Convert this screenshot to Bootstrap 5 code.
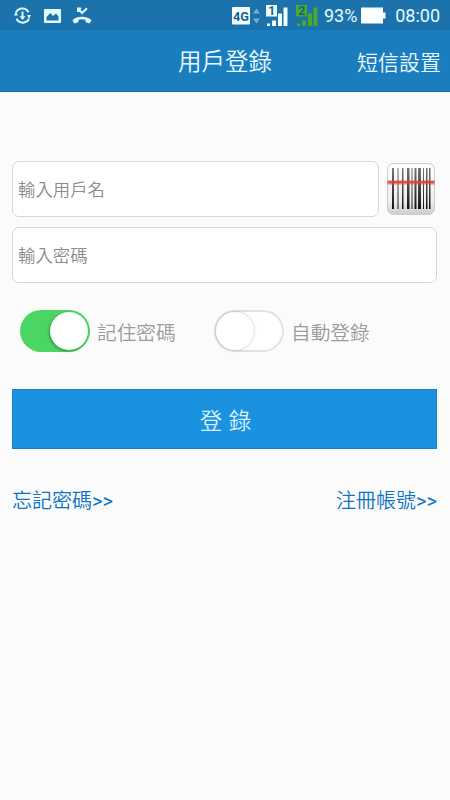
<!DOCTYPE html>
<html lang="zh-Hant">
<head>
<meta charset="utf-8">
<meta name="viewport" content="width=device-width, initial-scale=1">
<title>用戶登錄</title>
<link href="https://cdn.jsdelivr.net/npm/bootstrap@5.3.0/dist/css/bootstrap.min.css" rel="stylesheet">
<style>
body{background:#fbfbfb;font-family:Roboto,"Noto Sans CJK TC",sans-serif;font-weight:350;min-height:800px;line-height:1}
.status-bar{height:30px;background:#1c72ab;color:#e6fbff;padding:2px 10px 0 13px}
.status-bar svg{display:block;flex:none}
.status-text{font-size:18px;font-weight:400;white-space:nowrap}
.right-side{margin-left:140px;width:208px}
.signal{margin-left:4px}
.signal + .signal{margin-left:7px}
.percent{margin-left:5px}
.battery{margin-left:4px}
.clock{margin-left:auto}
.title-bar{display:grid;grid-template-columns:1fr auto 1fr;height:62px;background:#1a7ebe;color:#e9fbff;border-bottom:1px solid #176fa5;padding:5px 9px 0}
.title-bar h1{font-size:23.5px;font-weight:350;line-height:1}
.title-bar a{font-size:21px;color:inherit}
.login-form{padding:69px 13px 0 12px}
.login-form .form-control{height:56px;border:1px solid #d6d6d6;border-radius:7px;padding:2px 5px 0;font-size:17.4px;font-weight:350;background:#fff}
.login-form .form-control::placeholder{color:#8c8c8c;opacity:1}
.fields{gap:10px}
.scan-btn{width:50px;height:54px}
.switches{padding:25px 0 0 8px;height:70px;color:#9c9c9c;font-size:19.7px}
.first-switch{width:194px}
.toggle-label{margin:7px 0 0 7px}
.toggle-track{width:70px;height:42px;border-radius:21px;padding:2px}
.toggle-knob{width:38px;height:38px;border-radius:50%;background:#fff}
.toggle-on{background:#4bd663}
.toggle-on .toggle-knob{box-shadow:-1px 1px 3px rgba(0,70,0,.45)}
.toggle-off{background:#fff;border:2px solid #e2e2e2;padding:0}
.toggle-off .toggle-knob{box-shadow:0 0 3px rgba(0,0,0,.25)}
.submit-btn{height:60px;margin-top:36px;padding:4px 0 0 2px;background:#1b92df;border:1px solid #1783c6;color:#d9f1ff;font-size:22.5px;font-weight:350;line-height:1;word-spacing:1px}
.submit-btn:hover{background:#1783c6;color:#fff}
.links{margin-top:42px;font-size:20px}
.links a{color:#0b74c4}
.links span{font-weight:400}
</style>
<script src="https://cdn.jsdelivr.net/npm/bootstrap@5.3.0/dist/js/bootstrap.bundle.min.js"></script>
</head>
<body>
<div class="status-bar d-flex align-items-center">
  <svg width="19" height="18" viewBox="0 0 19 18" fill="none" stroke="#dcfaff" stroke-width="2"><path d="M3 5.500A7 7 0 0 1 15.500 5.200M16 11.800A7 7 0 0 1 3.500 11.800"/><path d="M9.500 4.500v7"/><path d="M6.500 9.300h6L9.500 13zM1 8.500h4L3 4.600zM14 8h4l-2 4z" fill="#dcfaff" stroke="none"/></svg>
  <svg class="ms-auto" width="17" height="15" viewBox="0 0 17 15"><path fill="#e4fbff" fill-rule="evenodd" d="M1 0h15a1 1 0 0 1 1 1v12a1 1 0 0 1-1 1H1a1 1 0 0 1-1-1V1a1 1 0 0 1 1-1zm1.500 11.500h12V7.500l-2.500-3-3 2.500-2.500-3-4 4z"/></svg>
  <svg class="ms-auto" width="20" height="18" viewBox="0 0 20 18"><path fill="none" stroke="#dcfaff" stroke-width="2" d="M6 .5v4.500M5.200 1.500h4M6 1.500l4 4.500L15 1.200"/><path fill="#e4fbff" d="M.5 13.500C3.500 8.500 16 8.500 19.500 13.500L17.500 16.500 13.500 15V12.700Q10 11.800 6.500 12.700V15L2.500 16.500z"/></svg>
  <div class="d-flex align-items-center right-side">
    <svg width="30" height="20" viewBox="0 0 30 20"><rect x="0" y="1" width="18" height="17.500" rx="1" fill="#f5ffff"/><text x="1" y="14.800" font-family="Roboto" font-size="13.500" font-weight="700" fill="#175f91" textLength="16" lengthAdjust="spacingAndGlyphs">4G</text><path fill="#72b0d2" d="M21 7.500h7L24.500 2.500zM21 12.500h7l-3.500 5z"/></svg>
    <svg class="signal" width="23" height="22" viewBox="0 0 23 22"><g fill="#eefeff"><path d="M0 0h11v11.500H0zM1 18.500h3V21H1zM6 15.500h4V21H6zM12 8.500h4V21h-4zM17.500 2.500h4V21h-4z"/></g><text x="2.300" y="10" font-family="Roboto" font-size="12" font-weight="700" fill="#175f91">1</text></svg>
    <svg class="signal" width="23" height="22" viewBox="0 0 23 22"><g fill="#49a929"><path d="M0 0h11v11.500H0zM1 18.500h3V21H1zM6 15.500h4V21H6zM12 8.500h4V21h-4zM17.500 2.500h4V21h-4z"/></g><text x="2.200" y="10" font-family="Roboto" font-size="12" font-weight="700" fill="#175f91">2</text></svg>
    <span class="status-text percent">93%</span>
    <svg class="battery" width="25" height="18" viewBox="0 0 25 18"><path fill="#fbffff" d="M1 .5h21v5h2.500v6H22v5H1a1 1 0 0 1-1-1v-14a1 1 0 0 1 1-1z"/></svg>
    <span class="status-text clock">08:00</span>
  </div>
</div>
<header class="title-bar align-items-center">
  <span></span>
  <h1 class="m-0">用戶登錄</h1>
  <a href="#" class="text-decoration-none text-end">短信設置</a>
</header>
<main class="login-form">
  <form>
    <div class="fields d-flex flex-column">
      <div class="d-flex align-items-center">
        <input type="text" class="form-control flex-grow-1" placeholder="輸入用戶名">
        <button type="button" class="scan-btn btn p-0 border-0 flex-shrink-0 ms-2" aria-label="掃描">
          <svg class="d-block" width="49" height="54" viewBox="0 0 49 54">
            <defs><linearGradient id="plate" x2="0" y2="1"><stop offset="0" stop-color="#fff"/><stop offset=".75" stop-color="#eee"/><stop offset="1" stop-color="#ccc"/></linearGradient>
            <linearGradient id="bars" x2="0" y2="1"><stop offset="0" stop-color="#777"/><stop offset=".5" stop-color="#444"/><stop offset="1" stop-color="#111"/></linearGradient></defs>
            <rect x=".5" y="1.500" width="47" height="51" rx="6" fill="url(#plate)" stroke="#ccc"/>
            <path fill="url(#bars)" d="M5 6h2v41H5zM10.500 6h1v41h-1zM15 6h1.500v41H15zM20 6h2.500v41H20zM24.500 6h1v41h-1zM27.500 6h2v41h-2zM31 6h3v41h-3zM36 6h1v41h-1zM39 6h1.500v41H39zM42 6h1.500v41H42z"/>
            <rect x="0" y="18" width="48" height="5" fill="#ed4c42" opacity=".35"/><rect x="1" y="19" width="46" height="2.500" fill="#dc4039" opacity=".85"/>
          </svg>
        </button>
      </div>
      <input type="password" class="form-control" placeholder="輸入密碼">
    </div>
    <div class="switches d-flex">
      <label class="d-flex align-items-center first-switch"><span class="toggle-track toggle-on d-flex justify-content-end"><span class="toggle-knob"></span></span><span class="toggle-label">記住密碼</span></label>
      <label class="d-flex align-items-center"><span class="toggle-track toggle-off d-flex"><span class="toggle-knob"></span></span><span class="toggle-label">自動登錄</span></label>
    </div>
    <button type="button" class="submit-btn btn rounded-0 w-100 d-block">登 錄</button>
    <div class="links d-flex justify-content-between">
      <a href="#" class="text-decoration-none">忘記密碼<span>&gt;&gt;</span></a>
      <a href="#" class="text-decoration-none">注冊帳號<span>&gt;&gt;</span></a>
    </div>
  </form>
</main>
</body>
</html>
